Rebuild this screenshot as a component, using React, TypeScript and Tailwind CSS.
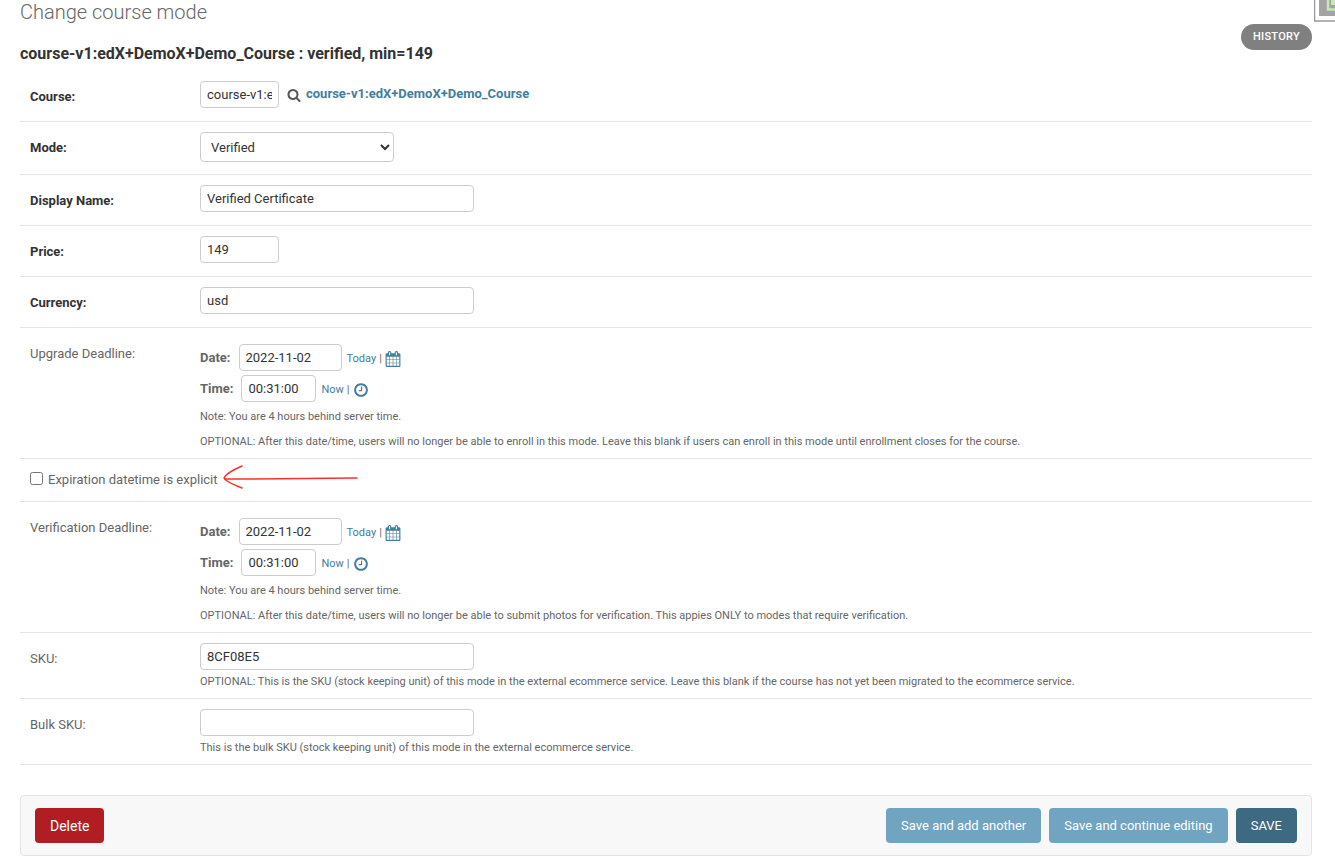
import React, { useState } from 'react';

const CALENDAR_PATH =
    'M192 1664h288v-288h-288v288zm352 0h320v-288h-320v288zm-352-352h288v-320h-288v320zm352 0h320v-320h-320v320zm-352-384h288v-288h-288v288zm736 736h320v-288h-320v288zm-384-736h320v-288h-320v288zm768 736h288v-288h-288v288zm-384-352h320v-320h-320v320zm-352-864v-288q0-13-9.5-22.5t-22.5-9.5h-64q-13 0-22.5 9.5t-9.5 22.5v288q0 13 9.5 22.5t22.5 9.5h64q13 0 22.5-9.5t9.5-22.5zm736 864h288v-320h-288v320zm-384-384h320v-288h-320v288zm384 0h288v-288h-288v288zm32-480v-288q0-13-9.5-22.5t-22.5-9.5h-64q-13 0-22.5 9.5t-9.5 22.5v288q0 13 9.5 22.5t22.5 9.5h64q13 0 22.5-9.5t9.5-22.5zm384-64v1280q0 52-38 90t-90 38h-1408q-52 0-90-38t-38-90v-1280q0-52 38-90t90-38h128v-96q0-66 47-113t113-47h64q66 0 113 47t47 113v96h384v-96q0-66 47-113t113-47h64q66 0 113 47t47 113v96h128q52 0 90 38t38 90z';
const CLOCK_PATH =
    'M1024 544v448q0 14-9 23t-23 9h-320q-14 0-23-9t-9-23v-64q0-14 9-23t23-9h224v-352q0-14 9-23t23-9h64q14 0 23 9t9 23zm416 352q0-148-73-273t-198-198-273-73-273 73-198 198-73 273 73 273 198 198 273 73 273-73 198-198 73-273zm224 0q0 209-103 385.5t-279.5 279.5-385.5 103-385.5-103-279.5-279.5-103-385.5 103-385.5 279.5-279.5 385.5-103 385.5 103 279.5 279.5 103 385.5z';
const SEARCH_PATH =
    'M1216 832q0-185-131.5-316.5t-316.5-131.5-316.5 131.5-131.5 316.5 131.5 316.5 316.5 131.5 316.5-131.5 131.5-316.5zm512 832q0 52-38 90t-90 38q-54 0-90-38l-343-342q-179 124-399 124-143 0-273.5-55.5t-225-150-150-225-55.5-273.5 55.5-273.5 150-225 225-150 273.5-55.5 273.5 55.5 225 150 150 225 55.5 273.5q0 220-124 399l343 343q37 37 37 90z';

const inputClass = 'h-[27px] rounded border border-[#ccc] bg-white px-1.5 text-[13px] text-[#333]';

function Icon({ path, className }: { path: string; className: string }) {
    return (
        <svg viewBox="0 0 1792 1792" fill="currentColor" className={className} aria-hidden="true">
            <path d={path} />
        </svg>
    );
}

interface RowProps {
    label: string;
    htmlFor?: string;
    required?: boolean;
    help?: string;
    children: React.ReactNode;
}

function FormRow({ label, htmlFor, required, help, children }: RowProps) {
    return (
        <div className="flex border-b border-[#e4e4e4] p-2.5">
            <label
                htmlFor={htmlFor}
                className={`w-[170px] shrink-0 pt-2 leading-4 ${required ? 'font-bold text-[#333]' : 'text-[#666]'}`}
            >
                {label}
            </label>
            <div className="min-w-0">
                {children}
                {help && <p className="mt-1.5 text-[11px] leading-3">{help}</p>}
            </div>
        </div>
    );
}

function TextRow({ id, label, value, help, required, narrow }: {
    id: string;
    label: string;
    value: string;
    help?: string;
    required?: boolean;
    narrow?: boolean;
}) {
    const [text, setText] = useState(value);

    return (
        <FormRow label={label} htmlFor={id} required={required} help={help}>
            <input
                id={id}
                value={text}
                onChange={e => setText(e.target.value)}
                className={`${inputClass} block ${narrow ? 'w-[79px]' : 'w-[274px]'} ${help ? '' : 'mb-[3px]'}`}
            />
        </FormRow>
    );
}

function DeadlineRow({ id, label, help }: { id: string; label: string; help: string }) {
    const [date, setDate] = useState('2022-11-02');
    const [time, setTime] = useState('00:31:00');

    return (
        <div role="group" aria-labelledby={`${id}-label`} className="flex border-b border-[#e4e4e4] p-2.5">
            <span id={`${id}-label`} className="w-[170px] shrink-0 pt-2 leading-4">{label}</span>
            <div className="min-w-0 pt-1.5">
                <div className="mb-1 flex items-center">
                    <label htmlFor={`${id}-date`} className="mr-2 leading-4 font-bold">Date:</label>
                    <input id={`${id}-date`} value={date} onChange={e => setDate(e.target.value)} className={`${inputClass} w-[103px]`} />
                    <span className="ml-[5px] flex items-center gap-[3px] pt-[3px] text-[11px]">
                        <a href="#" className="text-[#447e9b]">Today</a>
                        |
                        <a href="#" aria-label="Choose a date" className="text-[#447e9b]"><Icon path={CALENDAR_PATH} className="size-4" /></a>
                    </span>
                </div>
                <div className="mb-[9px] flex items-center">
                    <label htmlFor={`${id}-time`} className="mr-2 leading-4 font-bold">Time:</label>
                    <input id={`${id}-time`} value={time} onChange={e => setTime(e.target.value)} className={`${inputClass} w-[75px]`} />
                    <span className="ml-[5px] flex items-center gap-[3px] pt-[3px] text-[11px]">
                        <a href="#" className="text-[#447e9b]">Now</a>
                        |
                        <a href="#" aria-label="Choose a time" className="text-[#447e9b]"><Icon path={CLOCK_PATH} className="size-4" /></a>
                    </span>
                </div>
                <p className="text-[11px] leading-3">Note: You are 4 hours behind server time.</p>
                <p className="mt-[13px] text-[11px] leading-3">{help}</p>
            </div>
        </div>
    );
}

export default function App() {
    const [explicit, setExplicit] = useState(false);
    const [course, setCourse] = useState('course-v1:edX+DemoX+Demo_Course');

    return (
        <div className="relative overflow-hidden bg-white pr-[23px] pb-1.5 pl-5 font-['Roboto','Liberation_Sans',sans-serif] text-[13px] text-[#666]">
            {/* debug toolbar handle, hangs off the corner */}
            <svg viewBox="0 0 21 22" className="absolute top-0 right-0 h-[22px] w-[21px]" aria-hidden="true">
                <path d="M.5 0V21H21" fill="none" stroke="#999" strokeWidth="1.5" />
                <path d="M5 0H21V16H5z" fill="#a3a3a3" />
                <path d="M14 0V9.5H21" fill="none" stroke="#c5e8b0" strokeWidth="2.5" />
                <path d="M17 0V5H21V0z" fill="#c5e8b0" />
            </svg>

            <header className="flex justify-between">
                <div>
                    <h1 className="text-xl leading-6 font-light">Change course mode</h1>
                    <h2 className="mt-[18px] mb-[5px] text-base leading-6 font-bold text-[#333]">course-v1:edX+DemoX+Demo_Course : verified, min=149</h2>
                </div>
                <a href="#" className="mt-6 flex h-[26px] items-center rounded-full bg-[#808080] px-3 text-[11px] font-medium tracking-wide text-white">HISTORY</a>
            </header>

            <form onSubmit={e => e.preventDefault()}>
                <FormRow label="Course:" htmlFor="course" required>
                    <div className="mb-[3px] flex items-center">
                        <input id="course" value={course} onChange={e => setCourse(e.target.value)} className={`${inputClass} w-[79px]`} />
                        <a href="#" aria-label="Look up course" className="ml-2 text-[#555]"><Icon path={SEARCH_PATH} className="size-3.5" /></a>
                        <a href="#" className="ml-[5px] pb-0.5 font-bold text-[#447e9b]">course-v1:edX+DemoX+Demo_Course</a>
                    </div>
                </FormRow>
                <FormRow label="Mode:" htmlFor="mode" required>
                    <select id="mode" defaultValue="Verified" className="mb-0.5 block h-[30px] w-[194px] rounded border border-[#ccc] bg-white px-1.5 text-[13px] text-[#333]">
                        <option>Verified</option>
                        <option>Audit</option>
                        <option>Honor</option>
                    </select>
                </FormRow>
                <TextRow id="display-name" label="Display Name:" value="Verified Certificate" required />
                <TextRow id="price" label="Price:" value="149" required narrow />
                <TextRow id="currency" label="Currency:" value="usd" required />
                <DeadlineRow
                    id="upgrade"
                    label="Upgrade Deadline:"
                    help="OPTIONAL: After this date/time, users will no longer be able to enroll in this mode. Leave this blank if users can enroll in this mode until enrollment closes for the course."
                />
                <div className="flex h-[43px] items-center border-b border-[#e4e4e4] px-2.5">
                    <input id="explicit" type="checkbox" checked={explicit} onChange={e => setExplicit(e.target.checked)} className="mb-[3px] size-[13px]" />
                    <label htmlFor="explicit" className="ml-[5px]">Expiration datetime is explicit</label>
                    <svg viewBox="0 0 136 26" className="mb-1.5 ml-[5px] h-[26px] w-[136px]" fill="none" stroke="#f8312f" strokeWidth="1.5" strokeLinecap="round" aria-hidden="true">
                        <path d="M19 2Q3 9 1 14Q3 18 19 24" />
                        <path d="M2 15Q60 15 134 14" />
                    </svg>
                </div>
                <DeadlineRow
                    id="verification"
                    label="Verification Deadline:"
                    help="OPTIONAL: After this date/time, users will no longer be able to submit photos for verification. This appies ONLY to modes that require verification."
                />
                <TextRow
                    id="sku"
                    label="SKU:"
                    value="8CF08E5"
                    help="OPTIONAL: This is the SKU (stock keeping unit) of this mode in the external ecommerce service. Leave this blank if the course has not yet been migrated to the ecommerce service."
                />
                <TextRow
                    id="bulk-sku"
                    label="Bulk SKU:"
                    value=""
                    help="This is the bulk SKU (stock keeping unit) of this mode in the external ecommerce service."
                />

                <div className="mt-[30px] flex gap-2 rounded border border-[#e4e4e4] bg-[#f8f8f8] px-3.5 py-3 text-white">
                    <button type="button" className="mr-auto h-[35px] rounded bg-[#b01e23] px-[15px] text-sm">Delete</button>
                    <button type="submit" className="h-[35px] rounded bg-[#70a4c1] px-[15px]">Save and add another</button>
                    <button type="submit" className="h-[35px] rounded bg-[#70a4c1] px-[15px]">Save and continue editing</button>
                    <button type="submit" className="h-[35px] rounded bg-[#3d6a80] px-[15px]">SAVE</button>
                </div>
            </form>
        </div>
    );
}
